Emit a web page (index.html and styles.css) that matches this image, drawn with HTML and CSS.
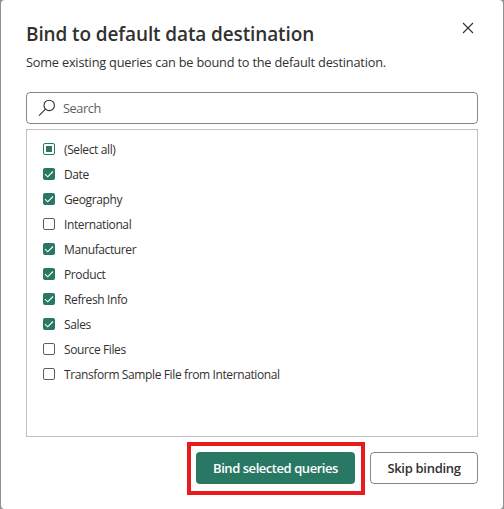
FILE: index.html
```html
<!DOCTYPE html>
<html lang="en">
<head>
<meta charset="utf-8">
<title>Bind to default data destination</title>
<link rel="stylesheet" href="styles.css">
</head>
<body>
<main class="dialog">
  <header class="header">
    <h1 class="title">Bind to default data destination</h1>
    <button class="close" aria-label="Close"><svg width="12" height="12" viewBox="0 0 12 12"><path d="M1 1l10 10M11 1L1 11"/></svg></button>
  </header>
  <p class="subtitle">Some existing queries can be bound to the default destination.</p>
  <div class="search">
    <svg width="18" height="18" viewBox="0 0 18 18"><circle cx="11.2" cy="6.4" r="5.2"/><path d="M7.5 10.1L1 16.6"/></svg>
    <span>Search</span>
  </div>
  <ul class="list">
    <li><i class="box partial"></i><span>(Select all)</span></li>
    <li><i class="box checked"><svg viewBox="0 0 12 12"><path d="M2 6.2L4.7 8.8L10 3.5"/></svg></i><span>Date</span></li>
    <li><i class="box checked"><svg viewBox="0 0 12 12"><path d="M2 6.2L4.7 8.8L10 3.5"/></svg></i><span>Geography</span></li>
    <li><i class="box"></i><span>International</span></li>
    <li><i class="box checked"><svg viewBox="0 0 12 12"><path d="M2 6.2L4.7 8.8L10 3.5"/></svg></i><span>Manufacturer</span></li>
    <li><i class="box checked"><svg viewBox="0 0 12 12"><path d="M2 6.2L4.7 8.8L10 3.5"/></svg></i><span>Product</span></li>
    <li><i class="box checked"><svg viewBox="0 0 12 12"><path d="M2 6.2L4.7 8.8L10 3.5"/></svg></i><span>Refresh Info</span></li>
    <li><i class="box checked"><svg viewBox="0 0 12 12"><path d="M2 6.2L4.7 8.8L10 3.5"/></svg></i><span>Sales</span></li>
    <li><i class="box"></i><span>Source Files</span></li>
    <li><i class="box"></i><span>Transform Sample File from International</span></li>
  </ul>
  <footer class="footer">
    <button class="btn primary">Bind selected queries</button>
    <button class="btn secondary">Skip binding</button>
  </footer>
</main>
</body>
</html>
```
FILE: styles.css
```css
* { box-sizing: border-box; }
html, body { margin: 0; height: 100%; }
body {
  background: #919191;
  padding: 0 1px;
  overflow: hidden;
  font-family: "Open Sans", "Noto Sans", sans-serif;
  color: #323130;
}
.dialog {
  height: 509px;
  padding: 0 25px;
  background: #fff;
  border-radius: 4px;
  display: flex;
  flex-direction: column;
}
.header {
  display: flex;
  justify-content: space-between;
  height: 50px;
  padding-top: 20px;
}
.title {
  margin: 0;
  padding-top: 1px;
  font-size: 19px;
  font-weight: 600;
  line-height: 27px;
  letter-spacing: -0.12px;
  white-space: nowrap;
}
.close {
  width: 20px;
  height: 16px;
  margin: 0;
  padding: 0;
  border: 0;
  background: none;
  display: flex;
  align-items: center;
  justify-content: center;
}
.close svg { stroke: #323130; stroke-width: 1.1; fill: none; }
.subtitle {
  margin: 3px 0 0;
  height: 39px;
  font-size: 12.75px;
  line-height: 18px;
  letter-spacing: -0.2px;
  white-space: nowrap;
}
.search {
  flex: none;
  height: 32px;
  border: 1px solid #8a8886;
  border-radius: 4px;
  display: flex;
  align-items: center;
  gap: 7px;
  padding-left: 11px;
  font-size: 12.75px;
  letter-spacing: -0.4px;
  color: #605e5c;
}
.search svg { stroke: #323130; stroke-width: 1.1; fill: none; }
.list {
  flex: none;
  height: 308px;
  margin: 5px 0 0;
  padding: 6px 16px;
  border: 1px solid #c1c1c1;
  list-style: none;
}
.list li {
  height: 25px;
  display: flex;
  align-items: flex-start;
  gap: 9px;
  padding-top: 7px;
  font-size: 12px;
  line-height: 13px;
  letter-spacing: -0.38px;
  white-space: nowrap;
}
.list span { padding-top: 0; }
.box {
  width: 12px;
  height: 12px;
  border: 1px solid #605e5c;
  border-radius: 2px;
  display: flex;
  align-items: center;
  justify-content: center;
}
.partial { border-color: #287864; }
.partial::after { content: ""; width: 6px; height: 6px; background: #287864; }
.checked { border: 0; background: #287864; }
.checked svg { width: 12px; height: 12px; fill: none; stroke: #fff; stroke-width: 1.1; }
.footer {
  margin-top: 15px;
  display: flex;
  justify-content: flex-end;
  gap: 15px;
}
.btn {
  height: 32px;
  margin: 0;
  padding: 0;
  border-radius: 4px;
  font: 600 13px "Open Sans", "Noto Sans", sans-serif;
  letter-spacing: -0.3px;
  white-space: nowrap;
}
.primary {
  position: relative;
  width: 159px;
  border: 0;
  background: #287864;
  color: #fff;
  letter-spacing: -0.45px;
}
.primary::after {
  content: "";
  position: absolute;
  inset: -10px -10px -11px -9px;
  border: 4px solid #e81a1c;
}
.secondary {
  width: 108px;
  border: 1px solid #8a8886;
  background: #fff;
  color: #323130;
}
```
